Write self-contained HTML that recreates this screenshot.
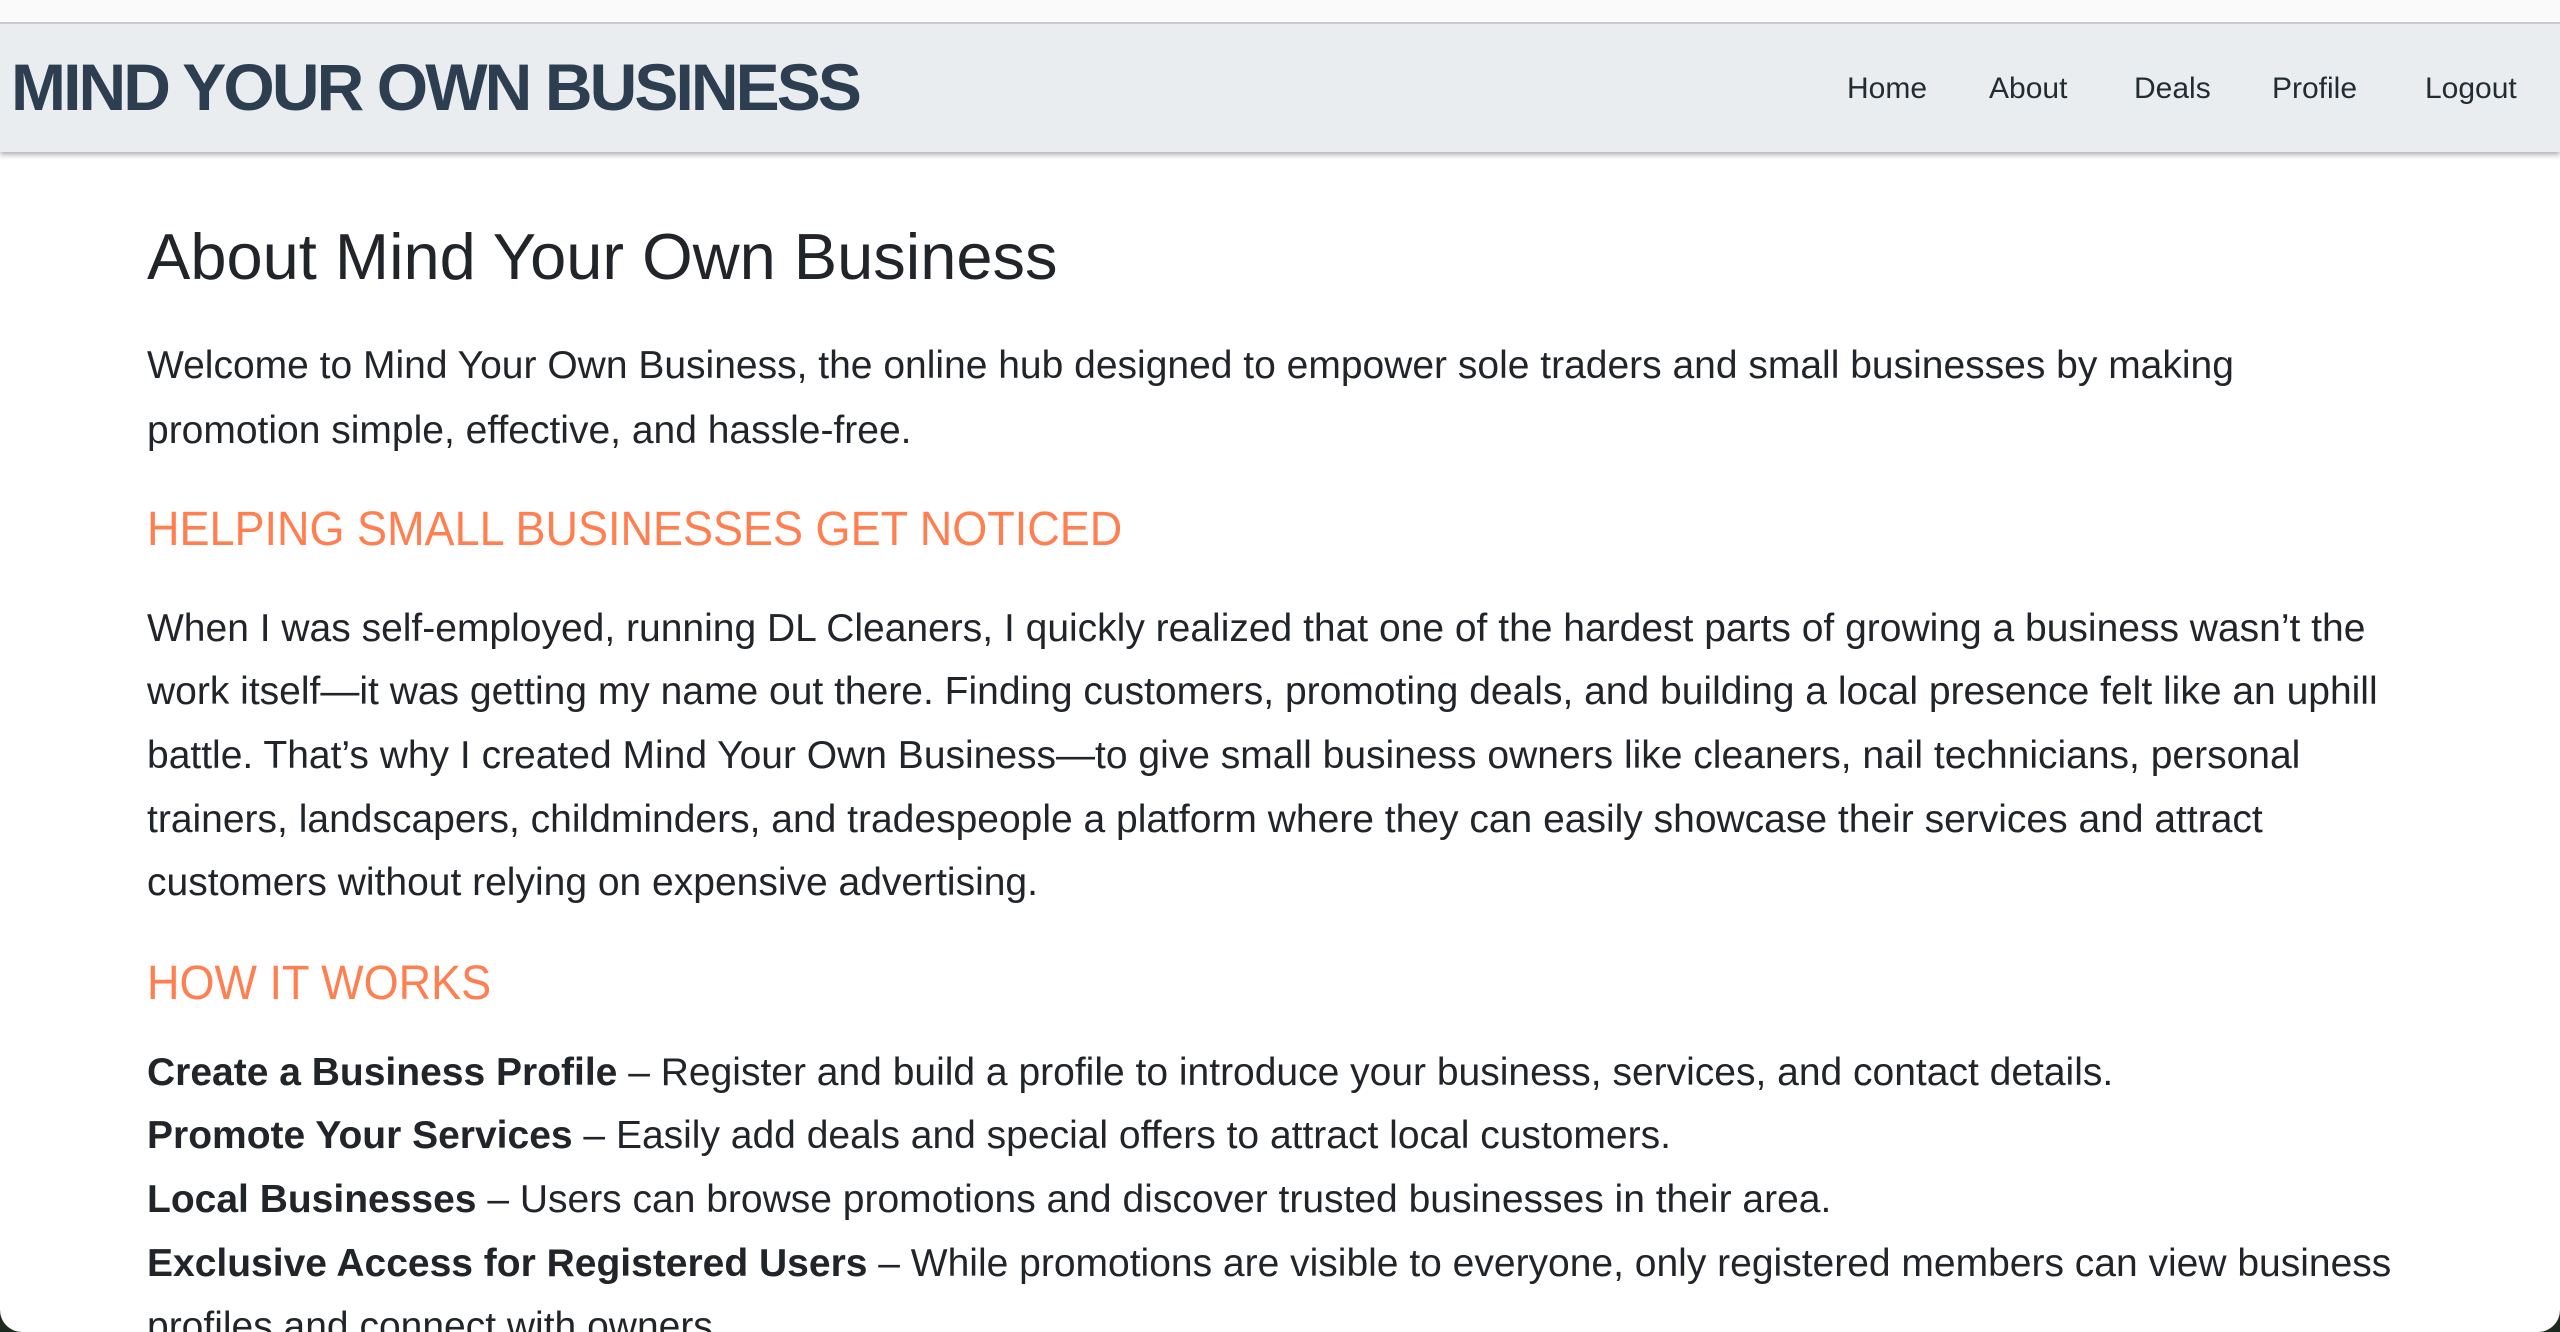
<!DOCTYPE html>
<html><head><meta charset="utf-8"><style>
html,body{margin:0;padding:0;}
body{width:2560px;height:1332px;overflow:hidden;background:#1d2a1d;font-family:"Liberation Sans",sans-serif;}
.win{position:absolute;left:0;top:0;width:2560px;height:1332px;background:#fff;border-radius:0 0 22px 22px;overflow:hidden;}
.topstrip{position:absolute;left:0;top:0;width:2560px;height:22px;background:#fafafa;border-bottom:2px solid #cfcfcf;}
.nav{position:absolute;left:0;top:24px;width:2560px;height:128px;background:#e9edf0;box-shadow:0 3px 5px rgba(0,0,0,0.3);}
.logo{position:absolute;left:11px;top:30px;font-size:66px;font-weight:bold;color:#2c3e50;letter-spacing:-2.9px;white-space:nowrap;line-height:1;}
.links{position:absolute;top:50px;font-size:30px;color:#222c33;white-space:nowrap;line-height:1;}
.content{position:absolute;left:147px;top:0;color:#212529;white-space:nowrap;}
.t{position:absolute;left:0;white-space:nowrap;}
h1{font-weight:normal;font-size:65px;margin:0;line-height:1;}
.p{font-size:39px;line-height:1;}
.o{color:#ff7f50;font-size:45px;line-height:1;transform:scaleY(1.08);transform-origin:left center;}
b{font-weight:bold;}
</style></head><body><div class="win">
<div class="topstrip"></div>
<div class="nav">
<div class="logo">MIND YOUR OWN BUSINESS</div>
<div class="links" style="left:1847px">Home</div>
<div class="links" style="left:1989px">About</div>
<div class="links" style="left:2134px">Deals</div>
<div class="links" style="left:2272px">Profile</div>
<div class="links" style="left:2425px">Logout</div>
</div>
<div class="content">
<div class="t" style="top:224px"><h1>About Mind Your Own Business</h1></div>
<div class="t p" style="top:346px">Welcome to Mind Your Own Business, the online hub designed to empower sole traders and small businesses by making</div>
<div class="t p" style="top:411px">promotion simple, effective, and hassle-free.</div>
<div class="t o" style="top:506px">HELPING SMALL BUSINESSES GET NOTICED</div>
<div class="t p" style="top:609px">When I was self-employed, running DL Cleaners, I quickly realized that one of the hardest parts of growing a business wasn’t the</div>
<div class="t p" style="top:672px">work itself—it was getting my name out there. Finding customers, promoting deals, and building a local presence felt like an uphill</div>
<div class="t p" style="top:736px">battle. That’s why I created Mind Your Own Business—to give small business owners like cleaners, nail technicians, personal</div>
<div class="t p" style="top:800px">trainers, landscapers, childminders, and tradespeople a platform where they can easily showcase their services and attract</div>
<div class="t p" style="top:863px">customers without relying on expensive advertising.</div>
<div class="t o" style="top:960px">HOW IT WORKS</div>
<div class="t p" style="top:1053px"><b>Create a Business Profile</b> – Register and build a profile to introduce your business, services, and contact details.</div>
<div class="t p" style="top:1116px"><b>Promote Your Services</b> – Easily add deals and special offers to attract local customers.</div>
<div class="t p" style="top:1180px"><b>Local Businesses</b> – Users can browse promotions and discover trusted businesses in their area.</div>
<div class="t p" style="top:1244px"><b>Exclusive Access for Registered Users</b> – While promotions are visible to everyone, only registered members can view business</div>
<div class="t p" style="top:1307px">profiles and connect with owners.</div>
</div>
</div></body></html>
